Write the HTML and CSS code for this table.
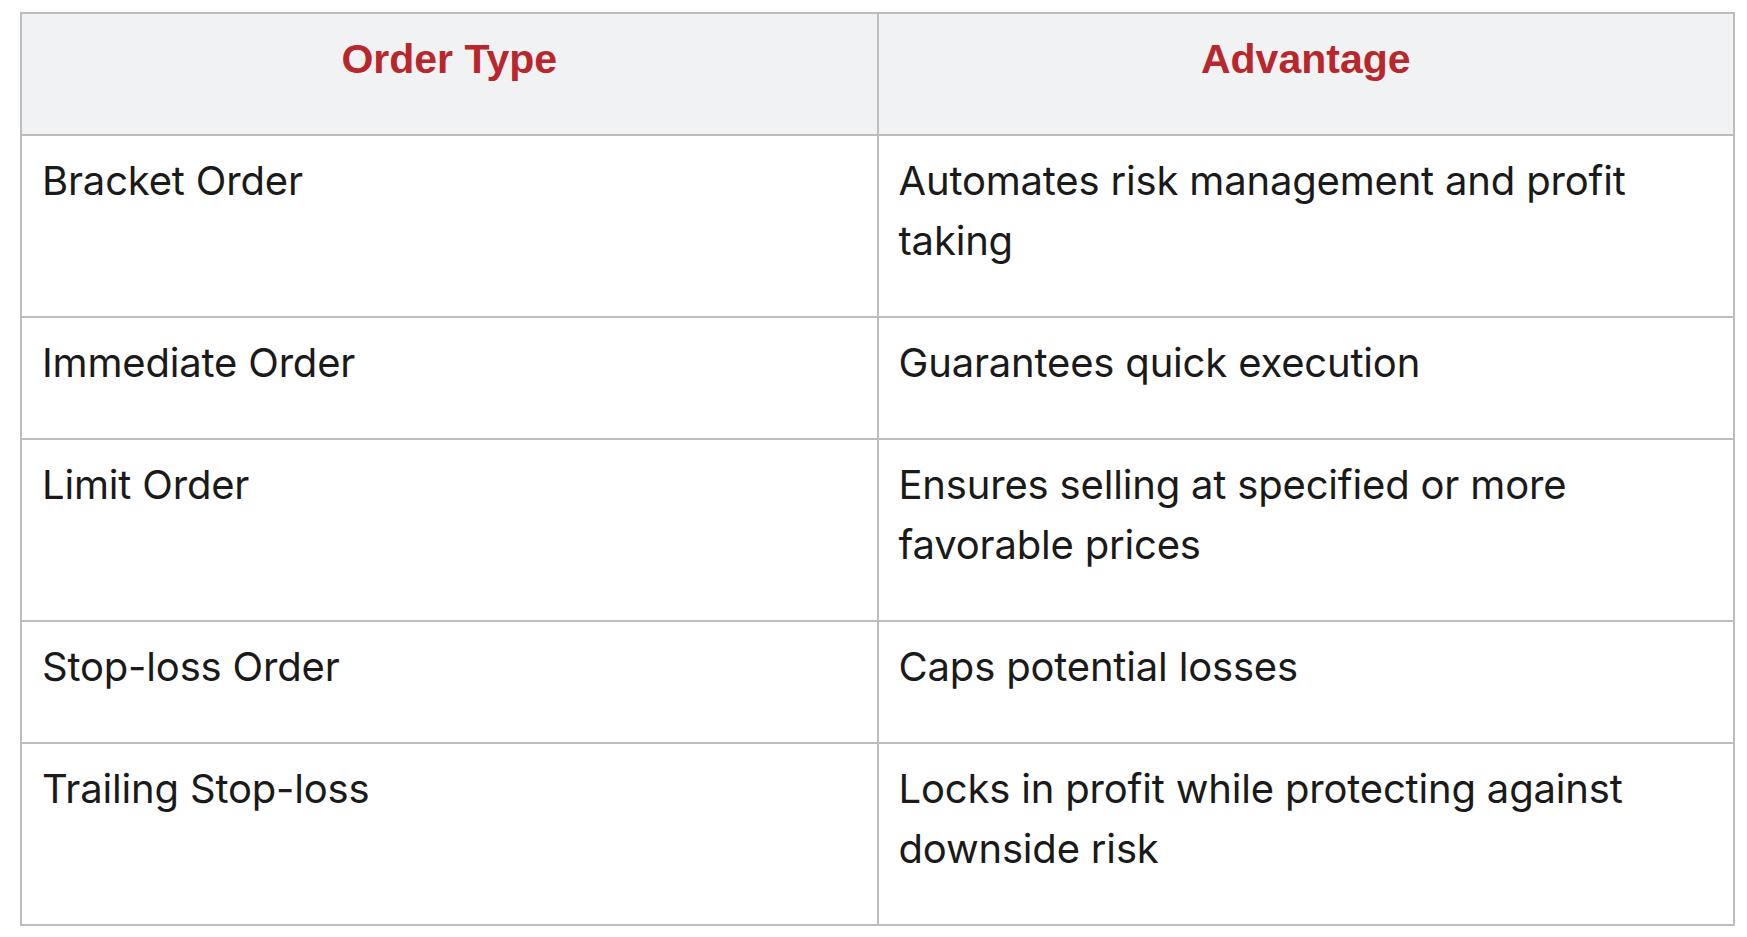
FILE: index.html
```html
<!DOCTYPE html>
<html lang="en">
<head>
<meta charset="utf-8">
<title>Order Types</title>
<link rel="stylesheet" href="styles.css">
</head>
<body>
<table class="orders">
  <thead>
    <tr>
      <th class="head-cell">Order Type</th>
      <th class="head-cell">Advantage</th>
    </tr>
  </thead>
  <tbody>
    <tr>
      <td class="cell">Bracket Order</td>
      <td class="cell">Automates risk management and profit taking</td>
    </tr>
    <tr>
      <td class="cell">Immediate Order</td>
      <td class="cell">Guarantees quick execution</td>
    </tr>
    <tr>
      <td class="cell">Limit Order</td>
      <td class="cell">Ensures selling at specified or more favorable prices</td>
    </tr>
    <tr>
      <td class="cell">Stop-loss Order</td>
      <td class="cell">Caps potential losses</td>
    </tr>
    <tr>
      <td class="cell">Trailing Stop-loss</td>
      <td class="cell">Locks in profit while protecting against downside risk</td>
    </tr>
  </tbody>
</table>
</body>
</html>
```
FILE: styles.css
```css
html, body {
  background: #ffffff;
}
body {
  margin: 12px 12px 12px 20px;
  font-family: Inter, "Noto Sans", sans-serif;
  color: #1a1a1a;
}
.orders {
  width: 100%;
  border-collapse: collapse;
  table-layout: fixed;
}
.head-cell {
  width: 50%;
  background: #f1f2f4;
  border: 2px solid #bdbdbd;
  padding: 15px 20px 45px;
  font-family: "Liberation Sans", Arial, sans-serif;
  font-weight: 700;
  font-size: 41px;
  line-height: 60px;
  color: #b8272b;
  text-align: center;
  vertical-align: top;
}
.cell {
  border: 2px solid #bdbdbd;
  padding: 15px 20px 45px;
  font-size: 40px;
  letter-spacing: -0.18px;
  line-height: 60px;
  text-align: left;
  vertical-align: top;
}
```
